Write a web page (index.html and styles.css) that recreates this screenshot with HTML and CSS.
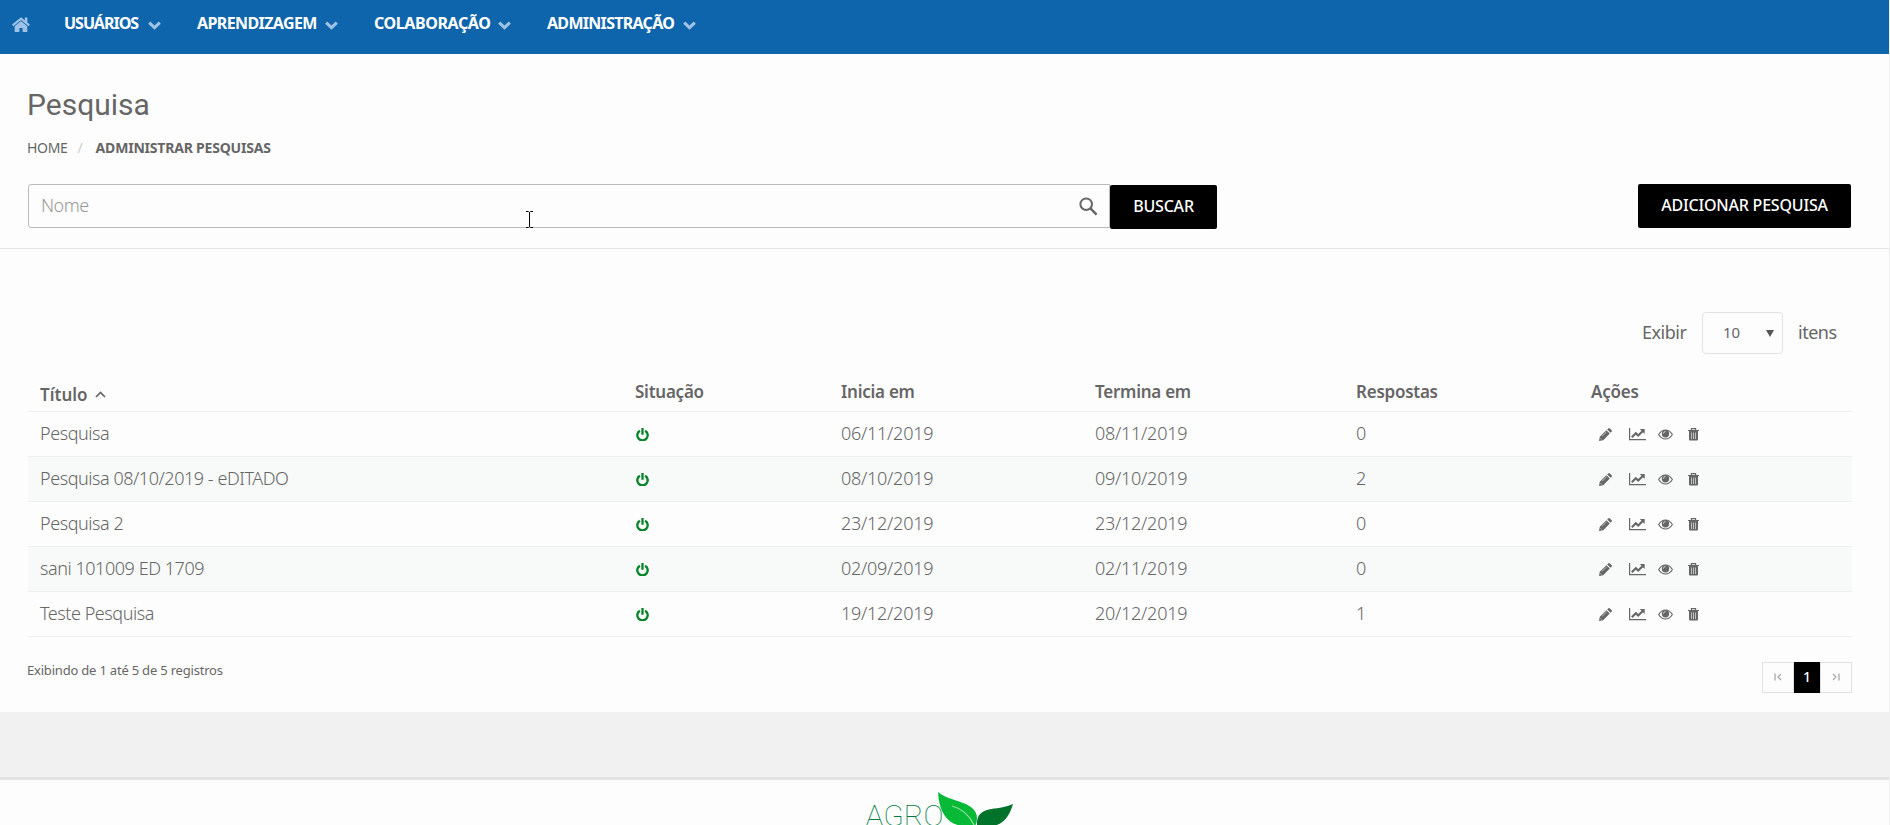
FILE: index.html
```
<!DOCTYPE html>
<html lang="pt-BR">
<head>
    <meta charset="UTF-8">
    <meta name="viewport" content="width=device-width, initial-scale=1.0">
    <title>Pesquisa</title>
    <link rel="stylesheet" href="styles.css">
</head>
<body>

    <!-- icons shared by the menu and the table -->
    <svg class="sprite" width="0" height="0">
        <symbol id="chevron" viewBox="0 0 13 9"><path d="M1.2 1.6 6.5 6.6 11.8 1.6" fill="none" stroke="currentColor" stroke-width="3.1"/></symbol>
        <symbol id="power" viewBox="0 0 13 13"><path d="M3.9 2.7A5.2 5.2 0 1 0 9.1 2.7M6.5 0V6.8" fill="none" stroke="currentColor" stroke-width="2.3"/></symbol>
        <symbol id="pencil" viewBox="0 0 13 13"><path d="M0 13 .8 8.8 7.4 2.2 10.8 5.6 4.2 12.2ZM8.2 1.4 9.2.4Q10.1-.3 10.9.5L12.5 2.1Q13.3 2.9 12.6 3.8L11.6 4.8Z" fill="currentColor"/><path d="M3 8.3 7.6 3.9M1.4 10.3 2.6 11.5" stroke="#ddd" stroke-width=".7"/></symbol>
        <symbol id="chart" viewBox="0 0 17 13"><path d="M.6 0V11.6H17" fill="none" stroke="currentColor" stroke-width="1.2"/><path d="M2.8 9.2 6.8 5.2 9.2 7.6 13.8 3" fill="none" stroke="currentColor" stroke-width="2.1"/><path d="M10.8 1H15.7V5.9Z" fill="currentColor"/></symbol>
        <symbol id="eye" viewBox="0 0 15 11"><path d="M.6 5.5Q3.3 1 7.5 1T14.4 5.5Q11.7 10 7.5 10T.6 5.5Z" fill="none" stroke="currentColor" stroke-width="1.1"/><circle cx="7.5" cy="4.7" r="3.7" fill="currentColor"/><path d="M5.4 4.7Q5.5 2.6 7.5 2.5" fill="none" stroke="#fff" stroke-width=".7"/></symbol>
        <symbol id="trash" viewBox="0 0 11 13"><path d="M3.4 2.2V.6H7.6V2.2M0 2.5H11" fill="none" stroke="currentColor" stroke-width="1.2"/><path d="M1 3H10V11.6Q10 12.6 9 12.6H2Q1 12.6 1 11.6Z" fill="currentColor"/><path d="M3.5 4.5V11M5.5 4.5V11M7.5 4.5V11" stroke="#fff" stroke-width=".6"/></symbol>
    </svg>

    <nav class="menu">
        <svg class="home" viewBox="0 0 18 15"><path d="M.7 8.4 9 1.6 17.3 8.4" fill="none" stroke="currentColor" stroke-width="2.1"/><path d="M12.8.5H15.3V6L12.8 4Z" fill="currentColor"/><path d="M9 4 15.3 9.2V15H10.6V11H7.4V15H2.7V9.2Z" fill="currentColor"/></svg>
        <a class="item usuarios">USUÁRIOS</a><svg class="chevron"><use href="#chevron"/></svg>
        <a class="item aprendizagem">APRENDIZAGEM</a><svg class="chevron"><use href="#chevron"/></svg>
        <a class="item colaboracao">COLABORAÇÃO</a><svg class="chevron"><use href="#chevron"/></svg>
        <a class="item administracao">ADMINISTRAÇÃO</a><svg class="chevron"><use href="#chevron"/></svg>
    </nav>

    <header class="page-header">
        <h1>Pesquisa</h1>
        <div class="breadcrumb">
            <span>HOME</span><span class="slash">/</span><strong>ADMINISTRAR PESQUISAS</strong>
        </div>
        <div class="toolbar">
            <div class="search">
                <span class="placeholder">Nome</span>
                <svg class="lens" viewBox="0 0 19 19"><circle cx="7.2" cy="7.2" r="5.8" fill="none" stroke="currentColor" stroke-width="2"/><path d="M11.4 11.4 17.6 17.6" stroke="currentColor" stroke-width="2.4"/></svg>
                <svg class="caret" viewBox="0 0 9 17"><path d="M1 .5H3.5L4.5 1.5 5.5.5H8M4.5 1V16M1 16.5H3.5L4.5 15.5 5.5 16.5H8" fill="none" stroke="#000"/></svg>
            </div>
            <button class="btn buscar">BUSCAR</button>
            <button class="btn adicionar">ADICIONAR PESQUISA</button>
        </div>
    </header>

    <main class="content">
        <div class="length">
            <span class="exibir">Exibir</span>
            <div class="select"><span>10</span><i class="arrow"></i></div>
            <span class="itens">itens</span>
        </div>

        <table class="list">
            <thead>
                <tr>
                    <th class="c-titulo">Título <svg class="sort" viewBox="0 0 11 7"><path d="M1 6 5.5 1.4 10 6" fill="none" stroke="currentColor" stroke-width="1.7"/></svg></th>
                    <th class="c-situacao">Situação</th>
                    <th class="c-inicia">Inicia em</th>
                    <th class="c-termina">Termina em</th>
                    <th class="c-respostas">Respostas</th>
                    <th class="c-acoes">Ações</th>
                </tr>
            </thead>
            <tbody id="rows"></tbody>
        </table>

        <div class="list-footer">
            <span class="info">Exibindo de 1 até 5 de 5 registros</span>
            <div class="pager">
                <span class="page"><svg viewBox="0 0 8 8"><path d="M1 .5V7.5M7 1 4 4 7 7" fill="none" stroke="currentColor" stroke-width="1.3"/></svg></span>
                <span class="page active">1</span>
                <span class="page"><svg viewBox="0 0 8 8"><path d="M7 .5V7.5M1 1 4 4 1 7" fill="none" stroke="currentColor" stroke-width="1.3"/></svg></span>
            </div>
        </div>
    </main>

    <footer class="footer">
        <div class="logo">
            <span class="brand">AGRO</span>
            <svg class="leaves" viewBox="0 0 76 34"><path d="M0 0C11 10 39 9 39 26Q39 31 37 34H27C12 34 1 23 0 0Z" fill="#06ba37"/><path d="M39 34C38 12 58 20 75 12C72 22 67 32 55 34Z" fill="#007229"/><path d="M14 14Q29 18 36 33" fill="none" stroke="#9ae0a2" stroke-width="1.2"/></svg>
        </div>
    </footer>

    <script>
        const surveys = [
            ["Pesquisa", "06/11/2019", "08/11/2019", 0],
            ["Pesquisa 08/10/2019 - eDITADO", "08/10/2019", "09/10/2019", 2],
            ["Pesquisa 2", "23/12/2019", "23/12/2019", 0],
            ["sani 101009 ED 1709", "02/09/2019", "02/11/2019", 0],
            ["Teste Pesquisa", "19/12/2019", "20/12/2019", 1]
        ];

        document.getElementById("rows").innerHTML = surveys.map(([title, start, end, answers]) => `
            <tr>
                <td>${title}</td>
                <td><svg class="power"><use href="#power"/></svg></td>
                <td class="date">${start}</td>
                <td class="date">${end}</td>
                <td>${answers}</td>
                <td><div class="actions">
                    <svg class="pencil"><use href="#pencil"/></svg>
                    <svg class="chart"><use href="#chart"/></svg>
                    <svg class="eye"><use href="#eye"/></svg>
                    <svg class="trash"><use href="#trash"/></svg>
                </div></td>
            </tr>`).join("");
    </script>

</body>
</html>
```
FILE: styles.css
```
* {
    margin: 0;
    padding: 0;
    box-sizing: border-box;
}

body {
    font-family: "Noto Sans", sans-serif;
    color: #666;
    background-color: #fdfdfd;
    border-right: 1px solid #eee;
    height: 825px;
    overflow: hidden;
}

svg {
    display: block;
    flex: none;
}

.sprite {
    position: absolute;
}

.menu {
    display: flex;
    align-items: flex-start;
    height: 54px;
    margin-right: -1px;
    padding: 12px 0 0 12px;
    background-color: #0f65ab;
    color: #9fc3e6;
}

.home {
    width: 18px;
    height: 15px;
    margin: 5px 34px 0 0;
}

.item {
    font-size: 16px;
    font-weight: 700;
    line-height: 22px;
    color: #fff;
    white-space: nowrap;
}

.usuarios {
    width: 84px;
    letter-spacing: -1px;
}

.aprendizagem {
    width: 128px;
    letter-spacing: -0.6px;
}

.colaboracao {
    width: 124px;
    letter-spacing: -0.4px;
}

.administracao {
    width: 136px;
    letter-spacing: -0.7px;
}

.chevron {
    width: 13px;
    height: 9px;
    margin: 9px 36px 0 0;
}

.page-header {
    height: 195px;
    padding: 33px 38px 0 28px;
    border-bottom: 1px solid #e5e5e5;
}

h1 {
    margin-left: -1px;
    font-family: Roboto, sans-serif;
    font-size: 30px;
    font-weight: 400;
    line-height: 36px;
}

.breadcrumb {
    display: flex;
    margin: 15px 0 0 -1px;
    font-size: 14px;
    line-height: 20px;
    letter-spacing: -0.3px;
}

.breadcrumb strong {
    letter-spacing: -0.2px;
}

.slash {
    width: 28px;
    padding-left: 10px;
    color: #c5d0c5;
}

.toolbar {
    display: flex;
    margin-top: 26px;
}

.search {
    position: relative;
    display: flex;
    justify-content: space-between;
    align-items: center;
    width: 1082px;
    height: 44px;
    padding: 0 11px 0 12px;
    border: 1px solid #bbb;
    border-radius: 3px 0 0 3px;
}

.placeholder {
    padding-bottom: 2px;
    font-size: 18px;
    font-weight: 300;
    line-height: 24px;
    letter-spacing: -0.5px;
    color: #999;
}

.lens {
    width: 19px;
    height: 19px;
}

/* text pointer resting over the field */
.caret {
    position: absolute;
    left: 496px;
    top: 26px;
    width: 9px;
    height: 17px;
}

.btn {
    height: 44px;
    padding-bottom: 2px;
    border: none;
    border-radius: 2px;
    background-color: #000;
    color: #fff;
    font-family: inherit;
    font-size: 16px;
    font-weight: 500;
    letter-spacing: -0.2px;
    white-space: nowrap;
}

.buscar {
    width: 107px;
    margin-top: 1px;
}

.adicionar {
    width: 213px;
    margin-left: auto;
}

.content {
    height: 463px;
    padding: 63px 37px 0 28px;
}

.length {
    display: flex;
    align-items: center;
    justify-content: flex-end;
    height: 42px;
    padding-right: 15px;
    font-size: 18px;
    letter-spacing: -0.5px;
}

.exibir {
    width: 60px;
    padding-bottom: 2px;
}

.itens {
    width: 39px;
    padding-bottom: 2px;
}

.select {
    display: flex;
    align-items: center;
    justify-content: space-between;
    width: 81px;
    height: 42px;
    margin-right: 15px;
    padding: 0 8px 2px 20px;
    border: 1px solid #e2e2e2;
    border-radius: 4px;
    font-size: 15px;
    letter-spacing: -0.2px;
}

.arrow {
    margin-top: 2px;
    border: 4px solid transparent;
    border-top: 7px solid #555;
    border-bottom: 0;
}

.list {
    width: 1824px;
    margin-top: 19px;
    table-layout: fixed;
    border-collapse: collapse;
    text-align: left;
    white-space: nowrap;
}

th {
    height: 38px;
    padding: 1px 12px 0;
    border-bottom: 1px solid #eee;
    font-size: 17px;
    font-weight: 600;
    line-height: 24px;
    letter-spacing: -0.25px;
}

td {
    height: 45px;
    padding: 0 12px 2px;
    border-bottom: 1px solid #eee;
    font-size: 18px;
    font-weight: 300;
    line-height: 24px;
    letter-spacing: -0.45px;
}

.date {
    letter-spacing: -0.25px;
}

tbody tr:nth-child(even) {
    background-color: #f8faf9;
}

.c-titulo {
    width: 595px;
    padding-top: 7px;
    letter-spacing: 0;
}

.c-situacao {
    width: 206px;
}

.c-inicia {
    width: 254px;
}

.c-termina {
    width: 261px;
}

.c-respostas {
    width: 235px;
}

.c-acoes {
    width: 273px;
}

.sort {
    display: inline-block;
    width: 11px;
    height: 7px;
    margin: 0 0 3px 3px;
}

.power {
    width: 13px;
    height: 13px;
    margin: 3px 0 0 1px;
    color: #058327;
}

.actions {
    display: flex;
    align-items: center;
    padding: 3px 0 0 8px;
}

.pencil {
    width: 13px;
    height: 13px;
    margin-right: 17px;
}

.chart {
    width: 17px;
    height: 13px;
    margin-right: 12px;
}

.eye {
    width: 15px;
    height: 11px;
    margin-right: 15px;
}

.trash {
    width: 11px;
    height: 13px;
}

.list-footer {
    display: flex;
    justify-content: space-between;
    margin-top: 25px;
}

.info {
    margin-left: -1px;
    font-size: 13px;
    line-height: 17px;
    letter-spacing: -0.2px;
}

.pager {
    display: flex;
}

.page {
    display: flex;
    align-items: center;
    justify-content: center;
    width: 32px;
    height: 31px;
    border: 1px solid #e0e0e0;
    color: #aaa;
    font-size: 14px;
}

.page svg {
    width: 8px;
    height: 8px;
}

.page.active {
    width: 26px;
    padding-bottom: 2px;
    border-color: #000;
    background-color: #000;
    color: #fff;
    font-weight: 500;
}

.footer {
    padding-top: 65px;
    background-color: #f1f1f1;
}

.logo {
    display: flex;
    justify-content: center;
    height: 48px;
    padding: 12px 9px 0 0;
    border-top: 3px solid #e3e3e3;
    background-color: #fdfdfd;
}

.brand {
    font-family: Roboto, sans-serif;
    font-size: 30px;
    font-weight: 100;
    line-height: 34px;
    padding-top: 7px;
    color: #007a3d;
}

.leaves {
    width: 76px;
    height: 34px;
    margin-left: -5px;
}
```
